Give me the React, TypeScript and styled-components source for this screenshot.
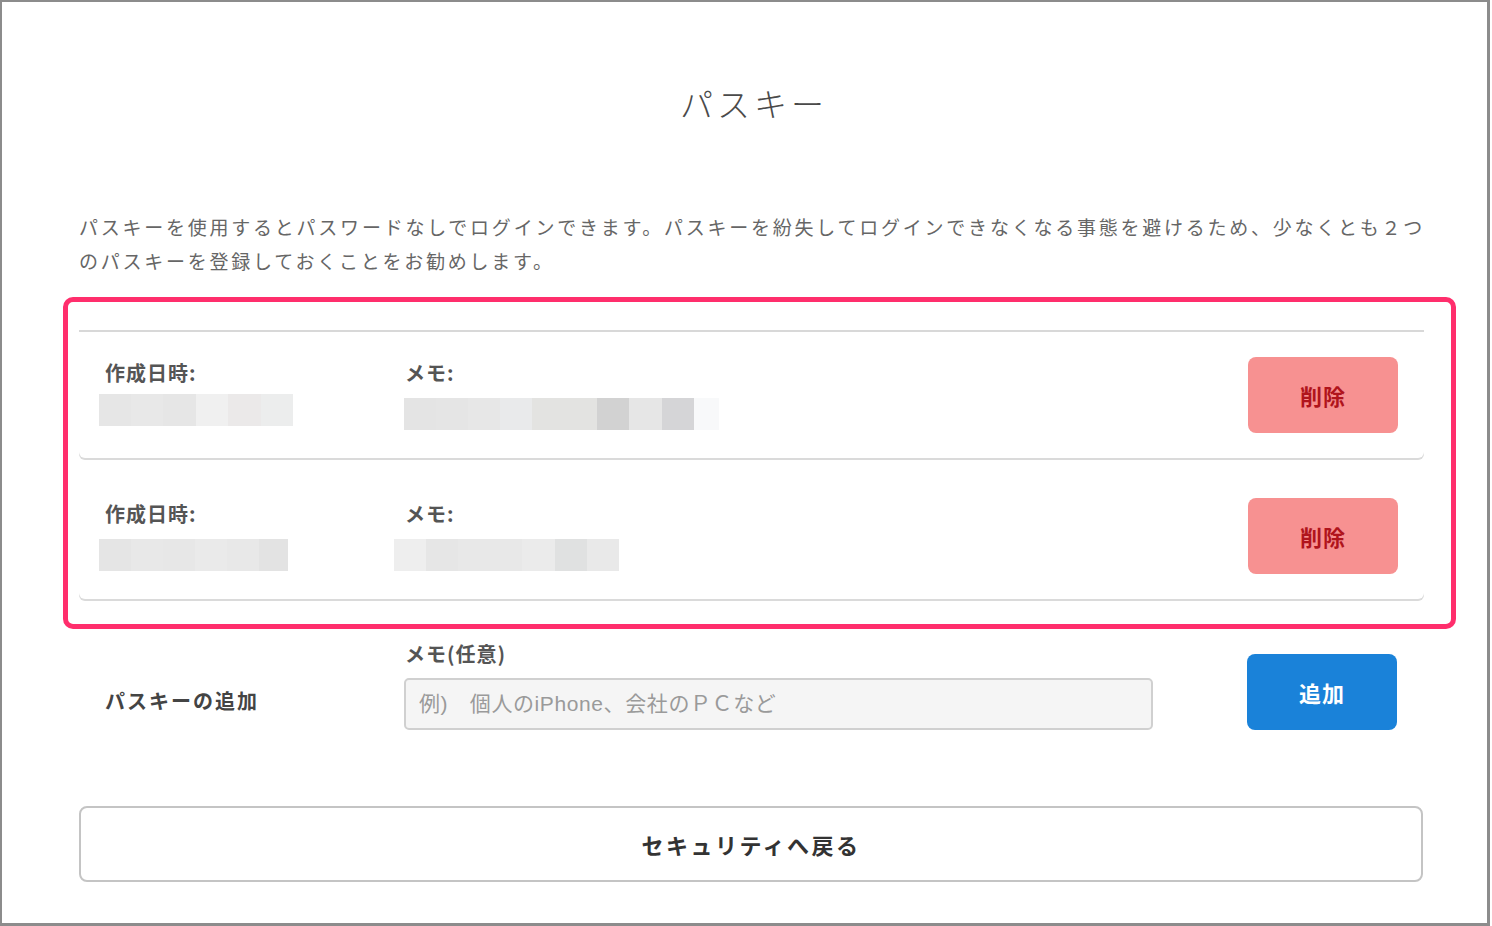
import { memo } from "react"
import styled, { createGlobalStyle } from "styled-components"

const GlobalStyle = createGlobalStyle`
  html, body {
    margin: 0;
    padding: 0;
    background: #ffffff;
  }
  body {
    font-family: "Noto Sans CJK JP", "Noto Sans", sans-serif;
    color: #444;
  }
`

const Frame = styled.div`
  width: 1490px;
  height: 926px;
  box-sizing: border-box;
  border: 2px solid #8c8c8c;
  border-right-width: 3px;
  border-bottom-width: 3px;
  padding: 77px 64px 0 77px;
`

const Title = styled.h1`
  margin: 0;
  text-align: center;
  font-size: 33px;
  line-height: 48px;
  font-weight: 300;
  letter-spacing: 4px;
  color: #4a4a4a;
  padding-left: 6px;
`

const Lead = styled.p`
  margin: 83px 0 0;
  font-size: 19px;
  line-height: 34px;
  letter-spacing: 2.76px;
  color: #666;
  white-space: nowrap;
`

const Highlight = styled.section`
  margin: 19px -33px 0 -16px;
  padding: 28px 27px 25px 11px;
  border: 5px solid #ff2e6c;
  border-radius: 10px;
`

const List = styled.div`
  border-top: 2px solid #d8d8d8;
  display: flex;
  flex-direction: column;
`

const Card = styled.div`
  display: grid;
  grid-template-columns: 305px 1fr 150px;
  align-items: center;
  padding: 25px 26px 25px 20px;
  border-radius: 0 0 6px 6px;
  box-shadow: 0 2px 0 #dadada;
  & + & {
    margin-top: 15px;
  }
`

const Field = styled.div<{ $gap: number; $lift: number }>`
  display: flex;
  flex-direction: column;
  gap: ${p => p.$gap}px;
  padding-bottom: ${p => p.$lift * 2}px;
`

const Label = styled.span<{ $indent?: number }>`
  padding-left: ${p => p.$indent ?? 6}px;
  font-size: 20px;
  line-height: 28px;
  font-weight: 700;
  letter-spacing: 1px;
  color: #555;
`

const Mosaic = styled.div<{ $shift: number; $drop: number }>`
  display: flex;
  height: 32px;
  margin-left: ${p => p.$shift}px;
  margin-top: ${p => p.$drop}px;
  margin-bottom: ${p => -p.$drop}px;
`

const Tile = styled.span<{ $w: number; $c: string }>`
  width: ${p => p.$w}px;
  height: 100%;
  background: ${p => p.$c};
`

const Button = styled.button<{ $tone: "danger" | "primary" }>`
  width: 150px;
  height: 76px;
  border: none;
  border-radius: 8px;
  font-family: "Noto Sans CJK JP", sans-serif;
  font-size: 22px;
  font-weight: 700;
  letter-spacing: 1px;
  cursor: pointer;
  background: ${p => (p.$tone === "danger" ? "#f79191" : "#1a82d9")};
  color: ${p => (p.$tone === "danger" ? "#b0141c" : "#ffffff")};
`

const AddRow = styled.div`
  display: grid;
  grid-template-columns: 305px 1fr 150px;
  align-items: end;
  margin-top: 11px;
  padding: 0 26px 0 20px;
`

const AddTitle = styled.span`
  padding-left: 6px;
  margin-bottom: 15px;
  font-size: 20px;
  line-height: 28px;
  font-weight: 700;
  letter-spacing: 2px;
  color: #444;
`

const MemoField = styled.div`
  display: flex;
  flex-direction: column;
  gap: 10px;
`

const MemoInput = styled.input`
  width: 749px;
  height: 52px;
  box-sizing: border-box;
  padding: 0 13px;
  border: 2px solid #d0d0d0;
  border-radius: 5px;
  background: #f5f5f5;
  font-family: "Liberation Sans", "Noto Sans CJK JP", sans-serif;
  font-size: 21px;
  letter-spacing: 0.6px;
  color: #444;
  &::placeholder {
    color: #9a9a9a;
  }
`

const BackButton = styled.button`
  display: block;
  width: 100%;
  height: 76px;
  margin-top: 76px;
  border: 2px solid #c4c4c4;
  border-radius: 8px;
  background: #fff;
  font-family: "Noto Sans CJK JP", sans-serif;
  font-size: 22px;
  font-weight: 700;
  letter-spacing: 2.5px;
  color: #333;
  cursor: pointer;
`

type Cell = [number, string]

type Passkey = {
  created: Cell[]
  memo: Cell[]
  memoShift: number
  memoDrop: number
  gap: number
  lift: number
}

const passkeys: Passkey[] = [
  {
    created: [
      [32, "#e6e6e6"],
      [32, "#e8e8e8"],
      [33, "#e6e6e6"],
      [32, "#f0f0f0"],
      [33, "#ebe9e9"],
      [32, "#eceded"],
    ],
    memo: [
      [32, "#e4e4e4"],
      [32, "#e5e5e5"],
      [32, "#e7e7e7"],
      [32, "#e9eaeb"],
      [33, "#e3e3e1"],
      [32, "#e3e3e1"],
      [32, "#d2d2d2"],
      [33, "#e6e6e6"],
      [32, "#d5d5d7"],
      [25, "#f8f9fa"],
    ],
    memoShift: 0,
    memoDrop: 4,
    gap: 7,
    lift: 3,
  },
  {
    created: [
      [32, "#e5e5e5"],
      [32, "#e8e8e8"],
      [32, "#e7e7e7"],
      [32, "#eaeaea"],
      [32, "#e8e8e8"],
      [29, "#e3e3e3"],
    ],
    memo: [
      [32, "#eeeeee"],
      [32, "#e6e6e6"],
      [32, "#e8e8e8"],
      [32, "#e8e8e8"],
      [33, "#ebebeb"],
      [32, "#e0e1e1"],
      [32, "#e9e9e9"],
    ],
    memoShift: -10,
    memoDrop: 0,
    gap: 11,
    lift: 1,
  },
]

const Blur = ({ cells, shift = 0, drop = 0 }: { cells: Cell[]; shift?: number; drop?: number }) => (
  <Mosaic $shift={shift} $drop={drop}>
    {cells.map(([w, c], i) => (
      <Tile key={i} $w={w} $c={c} />
    ))}
  </Mosaic>
)

const PasskeyCard = memo(({ item }: { item: Passkey }) => (
  <Card>
    <Field $gap={item.gap} $lift={item.lift}>
      <Label>作成日時:</Label>
      <Blur cells={item.created} />
    </Field>
    <Field $gap={item.gap} $lift={item.lift}>
      <Label $indent={1}>メモ:</Label>
      <Blur cells={item.memo} shift={item.memoShift} drop={item.memoDrop} />
    </Field>
    <Button $tone="danger">削除</Button>
  </Card>
))

export default function App() {
  return (
    <>
      <GlobalStyle />
      <Frame>
        <Title>パスキー</Title>
        <Lead>
          パスキーを使用するとパスワードなしでログインできます。パスキーを紛失してログインできなくなる事態を避けるため、少なくとも２つ
          <br />
          のパスキーを登録しておくことをお勧めします。
        </Lead>
        <Highlight>
          <List>
            {passkeys.map((p, i) => (
              <PasskeyCard key={i} item={p} />
            ))}
          </List>
        </Highlight>
        <AddRow>
          <AddTitle>パスキーの追加</AddTitle>
          <MemoField>
            <Label $indent={1}>メモ(任意)</Label>
            <MemoInput placeholder="例)　個人のiPhone、会社のＰＣなど" />
          </MemoField>
          <Button $tone="primary">追加</Button>
        </AddRow>
        <BackButton>セキュリティへ戻る</BackButton>
      </Frame>
    </>
  )
}
